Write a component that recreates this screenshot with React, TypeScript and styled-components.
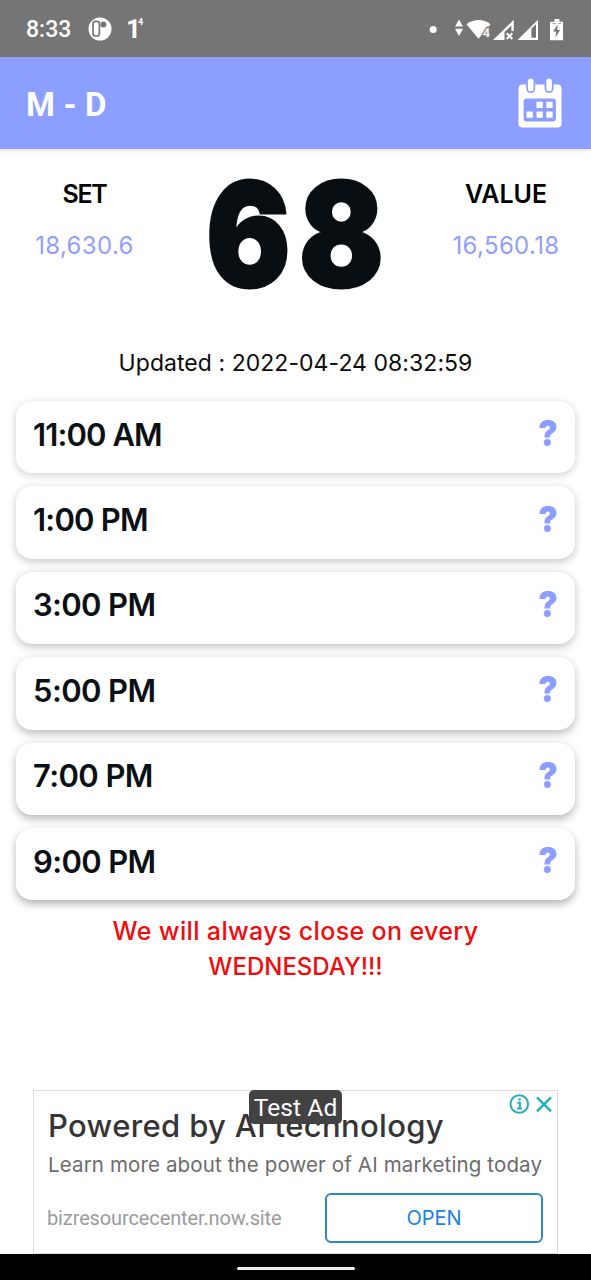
import React from 'react';
import styled, { createGlobalStyle } from 'styled-components';

const Global = createGlobalStyle`
  *, *::before, *::after { box-sizing: border-box; }
  body { margin: 0; background: #fff; }
`;

const Screen = styled.div`
  display: flex;
  flex-direction: column;
  height: 1280px;
  overflow: hidden;
  background: #fff;
  color: #000;
  font-family: Inter, "Liberation Sans", sans-serif;
  white-space: nowrap;
`;

const StatusBar = styled.div`
  display: flex;
  align-items: center;
  justify-content: space-between;
  flex: none;
  height: 57px;
  padding: 0 27px 0 26px;
  background: #757575;
  color: #fff;
`;

const StatusLeft = styled.div`
  display: flex;
  align-items: center;
`;

const Clock = styled.span`
  width: 62px;
  font: 500 23px/30px Roboto, sans-serif;
  padding-top: 2px;
`;

const Speed = styled.span`
  display: flex;
  align-items: flex-start;
  margin-left: 14px;
  padding-top: 1px;
  font: 700 26px/30px Roboto, sans-serif;
`;

const SpeedUnit = styled.span`
  margin-left: -3px;
  font-size: 9px;
  line-height: 16px;
`;

const Header = styled.header`
  display: flex;
  align-items: center;
  justify-content: space-between;
  flex: none;
  height: 92px;
  padding: 0 29px 0 26px;
  background: #8c9eff;
  color: #fff;
  box-shadow: 0 1px 4px rgba(60, 60, 110, 0.2);
`;

const Title = styled.h1`
  margin: 3px 0 0;
  font: 700 33px/40px Roboto, sans-serif;
  letter-spacing: 0.2px;
`;

const Summary = styled.section`
  display: grid;
  grid-template-columns: 169px 1fr 170px;
  height: 193px;
  padding-top: 27px;
`;

const Stat = styled.div`
  display: flex;
  flex-direction: column;
  align-items: center;
`;

const StatLabel = styled.span<{ $spacing: number }>`
  font-size: 25px;
  font-weight: 600;
  line-height: 37px;
  letter-spacing: ${(p) => p.$spacing}px;
`;

const StatValue = styled.span`
  margin-top: 14px;
  font-size: 24px;
  line-height: 37px;
  letter-spacing: 0.35px;
  color: #929ffa;
`;

const BigNumber = styled.div`
  justify-self: center;
  height: 120px;
  margin: -1px -10px 0 0;
  font-size: 145px;
  font-weight: 900;
  line-height: 120px;
  letter-spacing: 10px;
  color: #090e12;
  -webkit-text-stroke: 3px #090e12;
  transform: translateX(-1px) scaleX(0.86);
`;

const Updated = styled.p`
  margin: 0 0 17px;
  font-size: 23px;
  line-height: 42px;
  text-align: center;
  letter-spacing: 0.05px;
  color: #0b0b0b;
`;

const Slots = styled.ul`
  display: flex;
  flex-direction: column;
  gap: 13px;
  margin: 0 16px;
  padding: 0;
  list-style: none;
`;

const Slot = styled.li<{ $depth: number }>`
  display: flex;
  align-items: center;
  justify-content: space-between;
  height: 72.4px;
  padding: 0 17px 5px;
  border-radius: 16px;
  background: #fff;
  box-shadow: 0 ${(p) => 2 + p.$depth * 0.4}px 9px rgba(0, 0, 0, ${(p) => 0.2 + p.$depth * 0.02});
`;

const SlotTime = styled.span<{ $spacing: number }>`
  font-size: 31px;
  font-weight: 600;
  line-height: 44px;
  letter-spacing: ${(p) => p.$spacing}px;
  color: #0b1014;
`;

const SlotResult = styled.span`
  margin-bottom: 3px;
  font-size: 36px;
  font-weight: 900;
  line-height: 44px;
  color: #8c9eff;
  transform: scaleX(0.9);
  transform-origin: right;
`;

const Notice = styled.p`
  margin: 14px 0 0;
  font-size: 24px;
  font-weight: 500;
  line-height: 35px;
  text-align: center;
  color: #f00c0c;
`;

const NoticeLead = styled.span`
  font-size: 25px;
  letter-spacing: 0.35px;
`;

const Ad = styled.aside`
  position: relative;
  display: flex;
  flex-direction: column;
  flex: none;
  width: 525px;
  height: 164px;
  margin: auto auto 0 33px;
  padding: 14px 14px 0;
  border: 1px solid #dcdcdc;
`;

const AdTitle = styled.span`
  font-size: 31px;
  font-weight: 500;
  line-height: 42px;
  letter-spacing: 0.35px;
  color: #353535;
`;

const AdText = styled.span`
  margin-top: 2px;
  font-size: 20.5px;
  line-height: 32px;
  letter-spacing: 0.13px;
  color: #6c6c6c;
`;

const AdFooter = styled.div`
  display: flex;
  align-items: center;
  justify-content: space-between;
  margin-top: 12px;
`;

const AdLink = styled.span`
  margin-left: -1px;
  font: 400 20px/30px Roboto, sans-serif;
  letter-spacing: -0.12px;
  color: #9b9b9b;
`;

const OpenButton = styled.button`
  width: 218px;
  height: 50px;
  padding: 0;
  border: 2px solid #2a86d0;
  border-radius: 6px;
  background: #fff;
  color: #1d7fe0;
  font: 400 20px/44px Inter, sans-serif;
`;

const AdBadge = styled.span`
  position: absolute;
  top: -1px;
  left: 215px;
  width: 93px;
  height: 34px;
  border-radius: 5px;
  background: #424242;
  color: #fff;
  font: 400 24.5px/36px Roboto, sans-serif;
  letter-spacing: 0.1px;
  text-align: center;
`;

const AdChoices = styled.svg`
  position: absolute;
  top: 3px;
  right: 3px;
`;

const NavBar = styled.div`
  display: flex;
  justify-content: center;
  flex: none;
  height: 26px;
  padding-top: 13px;
  background: #000;
`;

const NavHandle = styled.div`
  width: 118px;
  height: 3px;
  border-radius: 2px;
  background: #ececec;
`;

const AppMark = () => (
  <svg width="24" height="24" viewBox="0 0 24 24">
    <circle cx="12" cy="12" r="11.5" fill="#fff" />
    <rect x="5" y="4.4" width="6.4" height="14.6" rx="2.6" fill="#fff" stroke="#757575" strokeWidth="1.7" />
    <circle cx="15.4" cy="7.6" r="3" fill="#757575" />
  </svg>
);

const StatusIcons = () => (
  <svg width="136" height="26" viewBox="0 0 136 26" fill="#fff">
    <circle cx="5.2" cy="13.4" r="3.5" />
    <path d="M31 3.6l4 7h-8zM31 20l-4-7.2h8z" />
    <path d="M38.5 8.2Q50.5 0 62.6 8.2L50.5 22.8Z" />
    <text
      x="55"
      y="20.5"
      fontFamily="Roboto"
      fontSize="12"
      fontWeight="700"
      stroke="#757575"
      strokeWidth="2.4"
      paintOrder="stroke"
    >
      4
    </text>
    <path d="M65 24L85.800 3.800V15H83.400V9.600L76.500 16V24Z" />
    <path d="M78.700 17.200l5.600 5.800M84.300 17.200l-5.600 5.800" stroke="#fff" strokeWidth="2" />
    <path fillRule="evenodd" d="M89.500 24L110 3.800V24ZM103.400 12.600V21.800H108V8.300Z" />
    <path d="M126.400 3h5v2.800h3.600v18.400h-13V5.800h4.400z" />
    <path d="M129.800 8.500l-4.800 7h3.200l-.8 6 4.700-7.500h-3z" fill="#757575" />
    <path d="M124.500 7.600h3.200M130.300 7.600h3" stroke="#757575" strokeWidth="0.8" />
  </svg>
);

const CalendarIcon = () => (
  <svg width="44" height="50" viewBox="0 0 44 50">
    <rect x="0.5" y="6.5" width="43" height="43" rx="4" fill="#fff" />
    <rect x="8.2" y="-1" width="9" height="16" rx="4.5" fill="#8c9eff" />
    <rect x="26.6" y="-1" width="9" height="16" rx="4.5" fill="#8c9eff" />
    <rect x="9.9" y="0.6" width="5.6" height="12.6" rx="2.8" fill="#fff" />
    <rect x="28.3" y="0.6" width="5.6" height="12.6" rx="2.8" fill="#fff" />
    <rect x="5.6" y="20.5" width="32.3" height="23" rx="3" fill="#8c9eff" />
    <path
      fill="#fff"
      d="M18.500 23.700h6.300v6.300h-6.300zM28.300 23.700h6.300v6.300h-6.300zM8.500 33.500h6.300v6.300h-6.300zM18.500 33.500h6.300v6.300h-6.300zM28.300 33.500h6.300v6.300h-6.300z"
    />
  </svg>
);

const slots = [
  { time: '11:00 AM', spacing: -0.9 },
  { time: '1:00 PM', spacing: -0.8 },
  { time: '3:00 PM', spacing: -0.65 },
  { time: '5:00 PM', spacing: -0.6 },
  { time: '7:00 PM', spacing: -0.6 },
  { time: '9:00 PM', spacing: -0.65 },
];

export default function App() {
  return (
    <>
      <Global />
      <Screen>
        <StatusBar>
          <StatusLeft>
            <Clock>8:33</Clock>
            <AppMark />
            <Speed>
              1<SpeedUnit>4</SpeedUnit>
            </Speed>
          </StatusLeft>
          <StatusIcons />
        </StatusBar>
        <Header>
          <Title>M - D</Title>
          <CalendarIcon />
        </Header>
        <Summary>
          <Stat>
            <StatLabel $spacing={-1.3}>SET</StatLabel>
            <StatValue>18,630.6</StatValue>
          </Stat>
          <BigNumber>68</BigNumber>
          <Stat>
            <StatLabel $spacing={0}>VALUE</StatLabel>
            <StatValue>16,560.18</StatValue>
          </Stat>
        </Summary>
        <Updated>Updated : 2022-04-24 08:32:59</Updated>
        <Slots>
          {slots.map((slot, index) => (
            <Slot key={slot.time} $depth={index}>
              <SlotTime $spacing={slot.spacing}>{slot.time}</SlotTime>
              <SlotResult>?</SlotResult>
            </Slot>
          ))}
        </Slots>
        <Notice>
          <NoticeLead>We will always close on every</NoticeLead>
          <br />
          WEDNESDAY!!!
        </Notice>
        <Ad>
          <AdTitle>Powered by AI technology</AdTitle>
          <AdText>Learn more about the power of AI marketing today</AdText>
          <AdFooter>
            <AdLink>bizresourcecenter.now.site</AdLink>
            <OpenButton>OPEN</OpenButton>
          </AdFooter>
          <AdBadge>Test Ad</AdBadge>
          <AdChoices width="46" height="22" viewBox="0 0 46 22" fill="none" stroke="#1fb0bf" strokeWidth="2">
            <circle cx="11.3" cy="10" r="8.8" />
            <path d="M9.3 8.8h2.600v5.700M9 14.500h5" />
            <path d="M10.300 5.500h2.400" strokeWidth="2.2" />
            <path d="M29 3.300l14 14M43 3.300l-14 14" strokeWidth="2.4" />
          </AdChoices>
        </Ad>
        <NavBar>
          <NavHandle />
        </NavBar>
      </Screen>
    </>
  );
}
